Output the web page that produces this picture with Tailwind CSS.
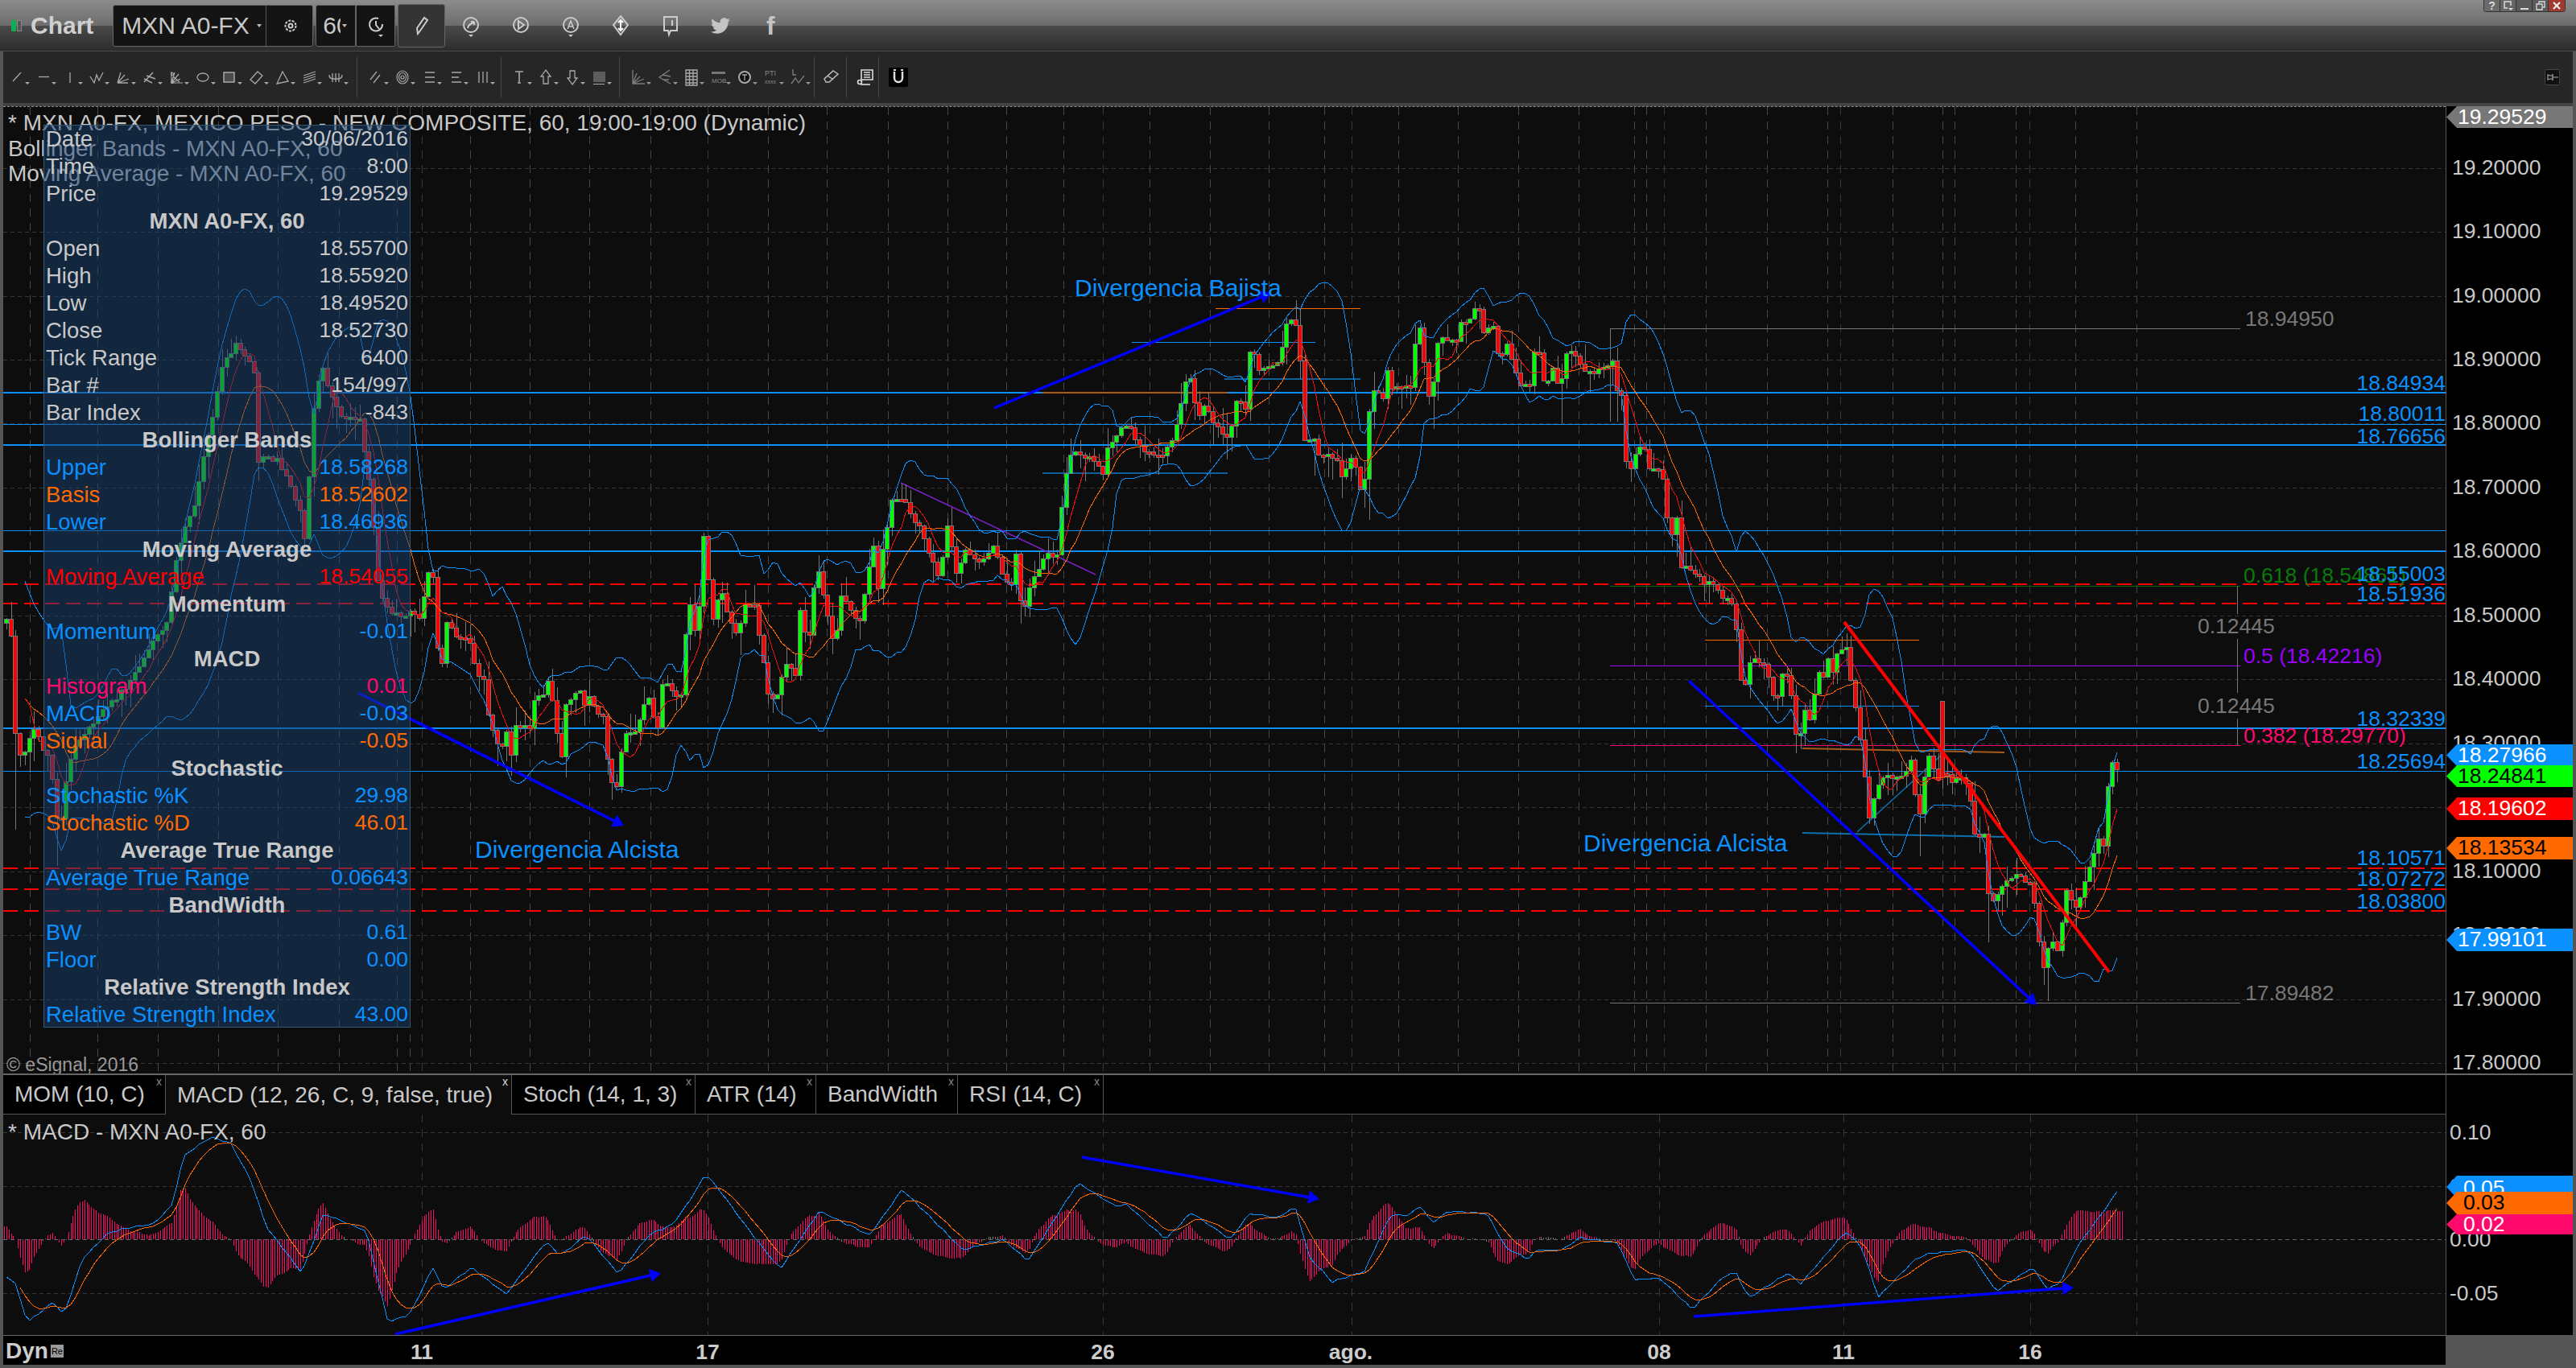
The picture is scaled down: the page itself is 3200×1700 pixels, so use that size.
<!DOCTYPE html>
<html>
<head>
<meta charset="utf-8">
<script src="https://cdn.jsdelivr.net/npm/@tailwindcss/browser@4"></script>
</head>
<body class="m-0 bg-black">
<div class="flex h-[1700px] w-[3200px] flex-col overflow-hidden bg-[#555] pb-1 font-['Liberation_Sans',Arial,sans-serif] text-[26.500px] text-[#c8c8c8]">

  <!-- title bar -->
  <header class="relative flex h-[64px] shrink-0 items-center border-b border-[#4a4a4a] bg-[linear-gradient(#8c8c8c_0,#6c6c6c_32px,#4a4a4a_32px,#2c2c2c_63px)] pl-[14px]">
    <span class="h-[14px] w-[6px] rounded-[1px] bg-[#10b050]"></span>
    <span class="ml-[1px] h-[14px] w-[6px] border border-[#888] bg-[#555]"></span>
    <span class="ml-[11px] text-[30px] font-bold text-[#d0d0d0]">Chart</span>
    <div class="ml-[24px] flex h-[52px] w-[249px] items-center rounded-[3px] border border-[#666] bg-[#141414] text-[30px]">
      <span class="w-[178px] overflow-hidden whitespace-nowrap pl-[10px]">MXN A0-FX</span>
      <svg class="mr-[5px] h-[6px] w-[6px]" viewBox="0 0 6 6"><path d="M0 1h6L3 5z" fill="#bbb"/></svg>
      <span class="h-full w-px bg-[#555]"></span>
      <svg class="ml-[20px] h-[24px] w-[20px]" viewBox="0 0 20 24" fill="none" stroke="#ccc" stroke-width="2"><circle cx="10" cy="12" r="6.5" stroke-dasharray="3 1.5"/><circle cx="10" cy="12" r="2.5"/></svg>
    </div>
    <div class="ml-[3px] flex h-[52px] w-[50px] items-center rounded-l-[3px] border border-[#666] bg-[#141414] text-[30px]">
      <span class="ml-[8px] w-[22px] overflow-hidden">60</span>
      <svg class="ml-[2px] h-[6px] w-[6px]" viewBox="0 0 6 6"><path d="M0 1h6L3 5z" fill="#bbb"/></svg>
    </div>
    <div class="flex h-[52px] w-[49px] items-center justify-center rounded-[2px] border border-[#666] bg-[#141414]">
      <svg class="h-[28px] w-[24px]" viewBox="0 0 24 28" fill="none" stroke="#ccc" stroke-width="2"><path d="M15 5a8 8 0 1 0 5 7"/><path d="M12 8v5l4 5"/><path d="M15 25h6l-3 3z" fill="#ccc" stroke="none"/></svg>
    </div>
    <div class="ml-[3px] flex h-[54px] w-[59px] items-center justify-center rounded-[3px] border border-[#666] bg-[#343434]">
      <svg class="h-[28px] w-[22px]" viewBox="0 0 22 28" fill="none" stroke="#ccc" stroke-width="2"><path d="M6 24l-1-7L14 4l4 3-9 13z"/></svg>
    </div>
    <div class="ml-[17px] flex items-center gap-[32px]">
      <svg class="h-[32px] w-[30px]" viewBox="0 0 30 32" fill="none" stroke="#ccc" stroke-width="2"><circle cx="15" cy="15" r="9"/><path d="M11 19c1-6 4-4 8-8M19 11v4M19 11h-4"/><path d="M12 27h6l-3 3z" fill="#ccc" stroke="none"/></svg>
      <svg class="h-[32px] w-[30px]" viewBox="0 0 30 32" fill="none" stroke="#ccc" stroke-width="2"><circle cx="15" cy="15" r="9"/><path d="M12 10l7 5-7 5z"/></svg>
      <svg class="h-[32px] w-[30px]" viewBox="0 0 30 32" fill="none" stroke="#ccc" stroke-width="2"><circle cx="15" cy="15" r="9"/><path d="M11 20l4-10 4 10M12.500 17h5" stroke-width="1.500"/><path d="M12 27h6l-3 3z" fill="#ccc" stroke="none"/></svg>
      <svg class="h-[32px] w-[30px]" viewBox="0 0 30 32" fill="none" stroke="#ccc" stroke-width="2"><path d="M15 4l9 11-9 12-9-12z"/><path d="M15 9v13M12 12l3-3 3 3M12 19l3 3 3-3" stroke="#fff"/></svg>
      <svg class="h-[32px] w-[30px]" viewBox="0 0 30 32" fill="none" stroke="#ccc" stroke-width="2"><path d="M7 5h16v17h-8l-2 5-1-5H7z"/><path d="M17 9v7" stroke-width="2"/></svg>
      <svg class="h-[32px] w-[30px]" viewBox="-3 -4 30 32"><path fill="#c4c4c4" d="M23.950 4.570a10 10 0 01-2.820.770 4.960 4.960 0 002.160-2.720c-.950.550-2 .950-3.130 1.170a4.920 4.920 0 00-8.380 4.480C7.690 8.090 4.070 6.130 1.640 3.160a4.820 4.820 0 00-.660 2.470c0 1.710.870 3.210 2.190 4.100a4.900 4.900 0 01-2.230-.620v.060a4.920 4.920 0 003.950 4.830 5 5 0 01-2.210.080 4.940 4.940 0 004.600 3.420A9.870 9.870 0 010 19.540a14 14 0 007.560 2.210c9.050 0 14-7.500 14-14 0-.210 0-.420-.010-.630.960-.700 1.800-1.560 2.460-2.550z"/></svg>
      <span class="w-[30px] text-center text-[32px] leading-[32px] font-bold text-[#c4c4c4]">f</span>
    </div>
    <div class="absolute top-0 right-[13px] flex h-[15px] w-[102px] overflow-hidden rounded-b-[4px] border-x border-b border-[#333] text-[14px] leading-[14px] text-[#ddd]">
      <span class="w-[20px] border-r border-[#333] bg-[#6a6a6a] text-center font-bold">?</span>
      <span class="flex w-[20px] items-center justify-center border-r border-[#333] bg-[#666]"><svg class="h-[12px] w-[12px]" viewBox="0 0 12 12" fill="none" stroke="#ddd" stroke-width="1.500"><path d="M9 6V1H1v8h4"/><path d="M6 9h6l-3 3z" fill="#ddd" stroke="none"/></svg></span>
      <span class="flex w-[20px] items-end justify-center border-r border-[#333] bg-[#5a5a5a] pb-[2px]"><span class="h-[2px] w-[10px] bg-[#ddd]"></span></span>
      <span class="flex w-[20px] items-center justify-center border-r border-[#333] bg-[#5a5a5a]"><svg class="h-[12px] w-[12px]" viewBox="0 0 12 12" fill="none" stroke="#ddd" stroke-width="1.300"><path d="M1 4h7v7H1zM4 3V1h7v7H9"/></svg></span>
      <span class="flex w-[20px] items-center justify-center bg-[#a03a30]"><svg class="h-[10px] w-[10px]" viewBox="0 0 10 10" stroke="#eee" stroke-width="2.200"><path d="M1 1l8 8M9 1L1 9"/></svg></span>
    </div>
  </header>

  <!-- drawing toolbar -->
  <div class="mx-1 flex h-[68px] shrink-0 items-center border-b-4 border-[#444] bg-[#262626] pl-1">
    <div class="flex items-center" >
      <svg class="h-[30px] w-[33px] shrink-0" viewBox="0 0 33 30" fill="none" stroke="#a8a8a8" stroke-width="1.300"><path d="M8 20L18 9"/><path d="M23 21h6l-3 3z" fill="#aaa" stroke="none"/></svg>
      <svg class="h-[30px] w-[33px] shrink-0" viewBox="0 0 33 30" fill="none" stroke="#a8a8a8" stroke-width="1.300"><path d="M7 14.500h13"/><path d="M23 21h6l-3 3z" fill="#aaa" stroke="none"/></svg>
      <svg class="h-[30px] w-[33px] shrink-0" viewBox="0 0 33 30" fill="none" stroke="#a8a8a8" stroke-width="1.300"><path d="M13 9v13"/><path d="M23 21h6l-3 3z" fill="#aaa" stroke="none"/></svg>
      <svg class="h-[30px] w-[33px] shrink-0" viewBox="0 0 33 30" fill="none" stroke="#a8a8a8" stroke-width="1.300"><path d="M5 14l5 8 3-10 3 7 5-10"/><path d="M23 21h6l-3 3z" fill="#aaa" stroke="none"/></svg>
      <svg class="h-[30px] w-[33px] shrink-0" viewBox="0 0 33 30" fill="none" stroke="#a8a8a8" stroke-width="1.300"><path d="M6 22l4-13M6 22l9-10M6 22l14-5M6 22h13"/><path d="M23 21h6l-3 3z" fill="#aaa" stroke="none"/></svg>
      <svg class="h-[30px] w-[33px] shrink-0" viewBox="0 0 33 30" fill="none" stroke="#a8a8a8" stroke-width="1.500"><path d="M6 21L17 9M9 13l11 4M6 17l10 5"/><path d="M23 21h6l-3 3z" fill="#aaa" stroke="none"/></svg>
      <svg class="h-[30px] w-[33px] shrink-0" viewBox="0 0 33 30" fill="none" stroke="#a8a8a8" stroke-width="1.200"><path d="M7 8v14h14M7 22l4-13M7 22l9-11M7 22l11-5M9 14l8 7"/><circle cx="8" cy="11" r="1.500"/><circle cx="8" cy="21" r="1.500"/><path d="M23 21h6l-3 3z" fill="#aaa" stroke="none"/></svg>
      <svg class="h-[30px] w-[33px] shrink-0" viewBox="0 0 33 30" fill="none" stroke="#a8a8a8" stroke-width="1.300"><ellipse cx="13" cy="15" rx="7" ry="5"/><path d="M23 21h6l-3 3z" fill="#aaa" stroke="none"/></svg>
      <svg class="h-[30px] w-[33px] shrink-0" viewBox="0 0 33 30" fill="#4a4a4a" stroke="#bbb" stroke-width="1.300"><rect x="6" y="9" width="13" height="12"/><path d="M23 21h6l-3 3z" fill="#aaa" stroke="none"/></svg>
      <svg class="h-[30px] w-[33px] shrink-0" viewBox="0 0 33 30" fill="none" stroke="#a8a8a8" stroke-width="1.300"><path d="M15 8l6 5-9 10-6-5z"/><path d="M23 21h6l-3 3z" fill="#aaa" stroke="none"/></svg>
      <svg class="h-[30px] w-[33px] shrink-0" viewBox="0 0 33 30" fill="none" stroke="#a8a8a8" stroke-width="1.300"><path d="M13 8l7 12-14 3z"/><path d="M23 21h6l-3 3z" fill="#aaa" stroke="none"/></svg>
      <svg class="h-[30px] w-[33px] shrink-0" viewBox="0 0 33 30" fill="none" stroke="#a8a8a8" stroke-width="1.300"><path d="M6 13l15-5M6 16l15-5M6 19l15-5M6 22l15-5"/><path d="M23 21h6l-3 3z" fill="#aaa" stroke="none"/></svg>
      <svg class="h-[30px] w-[33px] shrink-0" viewBox="0 0 33 30" fill="none" stroke="#a8a8a8" stroke-width="1.300"><path d="M5 12c0 5 3 5 8 5s8 0 8-5M9 10v11M13 10v11M17 10v11"/><path d="M23 21h6l-3 3z" fill="#aaa" stroke="none"/></svg>
    </div>
    <span class="ml-[6px] h-[50px] w-px bg-[#484848]"></span>
    <div class="ml-[10px] flex items-center">
      <svg class="h-[30px] w-[33px] shrink-0" viewBox="0 0 33 30" fill="none" stroke="#a8a8a8" stroke-width="1.300"><path d="M6 18l8-10M10 22l8-10"/><path d="M23 21h6l-3 3z" fill="#aaa" stroke="none"/></svg>
      <svg class="h-[30px] w-[33px] shrink-0" viewBox="0 0 33 30" fill="none" stroke="#a8a8a8" stroke-width="1.200"><ellipse cx="13" cy="15" rx="7" ry="8"/><ellipse cx="13" cy="15" rx="4.500" ry="5.500"/><circle cx="13" cy="15" r="2"/><path d="M23 21h6l-3 3z" fill="#aaa" stroke="none"/></svg>
      <svg class="h-[30px] w-[33px] shrink-0" viewBox="0 0 33 30" fill="none" stroke="#a8a8a8" stroke-width="1.300"><path d="M8 9h12M8 15h12M8 21h12"/><path d="M23 21h6l-3 3z" fill="#aaa" stroke="none"/></svg>
      <svg class="h-[30px] w-[33px] shrink-0" viewBox="0 0 33 30" fill="none" stroke="#a8a8a8" stroke-width="1.300"><path d="M8 9h12M8 15h9M8 21h12"/><path d="M23 21h6l-3 3z" fill="#aaa" stroke="none"/></svg>
      <svg class="h-[30px] w-[33px] shrink-0" viewBox="0 0 33 30" fill="none" stroke="#a8a8a8" stroke-width="1.300"><path d="M9 8v14M14 8v14M19 8v14"/><path d="M23 21h6l-3 3z" fill="#aaa" stroke="none"/></svg>
    </div>
    <span class="ml-[3px] h-[50px] w-px bg-[#484848]"></span>
    <div class="ml-[9px] flex items-center">
      <svg class="h-[30px] w-[33px] shrink-0" viewBox="0 0 33 30" fill="none" stroke="#a8a8a8" stroke-width="1.600"><path d="M8 8h10M13 8v14M11 22h4"/><path d="M23 21h6l-3 3z" fill="#aaa" stroke="none"/></svg>
      <svg class="h-[30px] w-[33px] shrink-0" viewBox="0 0 33 30" fill="none" stroke="#a8a8a8" stroke-width="1.300"><path d="M13 6l6 8h-3v9h-6v-9H7z"/><path d="M23 21h6l-3 3z" fill="#aaa" stroke="none"/></svg>
      <svg class="h-[30px] w-[33px] shrink-0" viewBox="0 0 33 30" fill="none" stroke="#a8a8a8" stroke-width="1.300"><path d="M13 24l6-8h-3V7h-6v9H7z"/><path d="M23 21h6l-3 3z" fill="#aaa" stroke="none"/></svg>
      <svg class="h-[30px] w-[33px] shrink-0" viewBox="0 0 33 30" fill="#5c5c5c" stroke="none"><rect x="6" y="8" width="15" height="13"/><path d="M6 23h14v1H6z" fill="#aaa"/><path d="M23 21h6l-3 3z" fill="#aaa"/></svg>
    </div>
    <span class="ml-[5px] h-[50px] w-px bg-[#484848]"></span>
    <div class="ml-[10px] flex items-center">
      <svg class="h-[30px] w-[33px] shrink-0" viewBox="0 0 33 30" fill="none" stroke="#7d7d7d" stroke-width="1.300"><path d="M6 6v17h15M6 23l5-13M6 23l9-9M6 23l14-6"/><path d="M23 21h6l-3 3z" fill="#999" stroke="none"/></svg>
      <svg class="h-[30px] w-[33px] shrink-0" viewBox="0 0 33 30" fill="none" stroke="#7d7d7d" stroke-width="1.300"><path d="M19 6L6 15l14 8M10 12l10 2M10 18l8 0"/><path d="M23 21h6l-3 3z" fill="#999" stroke="none"/></svg>
      <svg class="h-[30px] w-[33px] shrink-0" viewBox="0 0 33 30" fill="none" stroke="#aaa" stroke-width="1.300"><path d="M6 6h14v19H6zM6 10h14M6 14h14M6 18h14M6 22h14M10.500 6v19M15 6v19"/><path d="M23 21h6l-3 3z" fill="#999" stroke="none"/></svg>
      <svg class="h-[30px] w-[33px] shrink-0" viewBox="0 0 33 30" fill="#777"><rect x="5" y="8" width="17" height="3"/><text x="5" y="22" font-size="8" fill="#888">MOB</text><path d="M23 21h6l-3 3z" fill="#999"/></svg>
      <svg class="h-[30px] w-[33px] shrink-0" viewBox="0 0 33 30" fill="none" stroke="#aaa" stroke-width="1.300"><circle cx="13" cy="15" r="7" fill="#111" stroke-width="2"/><path d="M10 12h6M13 12v7"/><path d="M23 21h6l-3 3z" fill="#999" stroke="none"/></svg>
      <svg class="h-[30px] w-[33px] shrink-0" viewBox="0 0 33 30" fill="#888"><text x="5" y="13" font-size="9">PTI</text><text x="5" y="23" font-size="7">xxxx</text><path d="M23 21h6l-3 3z" fill="#999"/></svg>
      <svg class="h-[30px] w-[33px] shrink-0" viewBox="0 0 33 30" fill="none" stroke="#7d7d7d" stroke-width="1.300"><path d="M7 5v7h4M5 23l5-7 4 6 7-9"/><path d="M23 21h6l-3 3z" fill="#999" stroke="none"/></svg>
    </div>
    <span class="h-[50px] w-px bg-[#484848]"></span>
    <svg class="ml-[7px] h-[30px] w-[30px] shrink-0" viewBox="0 0 30 30" fill="none" stroke="#bbb" stroke-width="1.500"><path d="M7 21l-2-4L16 7l6 4-11 10zM9 13l7 5"/></svg>
    <span class="ml-[2px] h-[50px] w-px bg-[#484848]"></span>
    <svg class="ml-[8px] h-[30px] w-[30px] shrink-0" viewBox="0 0 30 30" fill="none" stroke="#ddd" stroke-width="1.600"><path d="M10 6h14v12H10zM13 9h8M13 12h8M13 15h8"/><circle cx="8" cy="21" r="2.500"/><path d="M9 24h12"/></svg>
    <span class="ml-[1px] h-[50px] w-px bg-[#484848]"></span>
    <span class="ml-[12px] flex h-[24px] w-[24px] items-center justify-center rounded-[2px] bg-black">
      <svg class="h-[20px] w-[14px]" viewBox="0 0 14 20" fill="none" stroke="#ddd" stroke-width="2.500"><path d="M2 3v8a5 5 0 0 0 10 0V3"/><path d="M1 1h3M10 1h3" stroke-width="2"/></svg>
    </span>
    <span class="mr-[16px] ml-auto flex h-[20px] w-[19px] items-center justify-center rounded-[2px] border border-[#444] bg-[#111]">
      <svg class="h-[10px] w-[14px]" viewBox="0 0 14 10" fill="none" stroke="#aaa" stroke-width="1.200"><path d="M1 2l3 1h3V1v8-2H4L1 8zM7 5h7"/></svg>
    </span>
  </div>

  <!-- price pane -->
  <section class="mx-1 flex h-[1204px] shrink-0 border-b-2 border-[#666]">
    <div class="relative h-[1202px] w-[3034px] shrink-0 overflow-hidden border-t border-dashed border-[#888] bg-[#0d0d0d]">
      <svg id="main" class="absolute top-0 left-0 h-[1202px] w-[3034px]" viewBox="4 132 3034 1202"></svg>

      <div class="absolute top-[5px] left-[6px] text-[28px] leading-[30px] whitespace-nowrap">* MXN A0-FX, MEXICO PESO - NEW COMPOSITE, 60, 19:00-19:00 (Dynamic)</div>
      <div class="absolute top-[37px] left-[6px] text-[28px] leading-[30px] whitespace-nowrap">Bollinger Bands - MXN A0-FX, 60</div>
      <div class="absolute top-[68px] left-[6px] text-[28px] leading-[30px] whitespace-nowrap">Moving Average - MXN A0-FX, 60</div>
      <div class="absolute top-[1175px] left-[4px] whitespace-nowrap text-[23px] leading-[30px] text-[#999]">© eSignal, 2016</div>

      <div class="absolute top-[208px] left-[1331px] text-[30px] leading-[34px] whitespace-nowrap text-[#0a90ff]">Divergencia Bajista</div>
      <div class="absolute top-[906px] left-[586px] text-[30px] leading-[34px] whitespace-nowrap text-[#0a90ff]">Divergencia Alcista</div>
      <div class="absolute top-[898px] left-[1963px] text-[30px] leading-[34px] whitespace-nowrap text-[#0a90ff]">Divergencia Alcista</div>

      <div class="absolute top-[248px] left-[2785px] leading-[30px] text-[#777]">18.94950</div>
      <div class="absolute top-[1086px] left-[2785px] leading-[30px] text-[#777]">17.89482</div>
      <div class="absolute top-[630px] left-[2726px] leading-[30px] text-[#777]">0.12445</div>
      <div class="absolute top-[729px] left-[2726px] leading-[30px] text-[#777]">0.12445</div>
      <div class="absolute top-[567px] left-[2783px] leading-[30px] whitespace-nowrap text-[#0a7a0a]">0.618 (18.54861)</div>
      <div class="absolute top-[667px] left-[2783px] leading-[30px] whitespace-nowrap text-[#9900ff]">0.5 (18.42216)</div>
      <div class="absolute top-[766px] left-[2783px] leading-[30px] whitespace-nowrap text-[#ff0a6c]">0.382 (18.29770)</div>

      <div class="absolute top-[328px] right-0 leading-[30px] text-[#0a90ff]">18.84934</div>
      <div class="absolute top-[366px] right-0 leading-[30px] text-[#0a90ff]">18.80011</div>
      <div class="absolute top-[394px] right-0 leading-[30px] text-[#0a90ff]">18.76656</div>
      <div class="absolute top-[565px] right-0 leading-[30px] text-[#0a90ff]">18.55003</div>
      <div class="absolute top-[590px] right-0 leading-[30px] text-[#0a90ff]">18.51936</div>
      <div class="absolute top-[745px] right-0 leading-[30px] text-[#0a90ff]">18.32339</div>
      <div class="absolute top-[798px] right-0 leading-[30px] text-[#0a90ff]">18.25694</div>
      <div class="absolute top-[918px] right-0 leading-[30px] text-[#0a90ff]">18.10571</div>
      <div class="absolute top-[944px] right-0 leading-[30px] text-[#0a90ff]">18.07272</div>
      <div class="absolute top-[972px] right-0 leading-[30px] text-[#0a90ff]">18.03800</div>

      <!-- cursor data window -->
      <div class="absolute top-[22px] left-[50px] flex h-[1122px] w-[456px] flex-col border border-[#35566f] bg-[#173f6f]/50 pr-[2px] pl-[2px] text-[27.500px] [&_span:last-child]:text-[26.500px] [&_span:first-child]:text-[27.500px]">
        <div class="flex h-[34px] shrink-0 items-center justify-between"><span>Date</span><span>30/06/2016</span></div>
        <div class="flex h-[34px] shrink-0 items-center justify-between"><span>Time</span><span>8:00</span></div>
        <div class="flex h-[34px] shrink-0 items-center justify-between"><span>Price</span><span>19.29529</span></div>
        <div class="flex h-[34px] shrink-0 items-center justify-center font-bold">MXN A0-FX, 60</div>
        <div class="flex h-[34px] shrink-0 items-center justify-between"><span>Open</span><span>18.55700</span></div>
        <div class="flex h-[34px] shrink-0 items-center justify-between"><span>High</span><span>18.55920</span></div>
        <div class="flex h-[34px] shrink-0 items-center justify-between"><span>Low</span><span>18.49520</span></div>
        <div class="flex h-[34px] shrink-0 items-center justify-between"><span>Close</span><span>18.52730</span></div>
        <div class="flex h-[34px] shrink-0 items-center justify-between"><span>Tick Range</span><span>6400</span></div>
        <div class="flex h-[34px] shrink-0 items-center justify-between"><span>Bar #</span><span>154/997</span></div>
        <div class="flex h-[34px] shrink-0 items-center justify-between"><span>Bar Index</span><span>-843</span></div>
        <div class="flex h-[34px] shrink-0 items-center justify-center font-bold">Bollinger Bands</div>
        <div class="flex h-[34px] shrink-0 items-center justify-between text-[#0a90ff]"><span>Upper</span><span>18.58268</span></div>
        <div class="flex h-[34px] shrink-0 items-center justify-between text-[#ff6a00]"><span>Basis</span><span>18.52602</span></div>
        <div class="flex h-[34px] shrink-0 items-center justify-between text-[#0a90ff]"><span>Lower</span><span>18.46936</span></div>
        <div class="flex h-[34px] shrink-0 items-center justify-center font-bold">Moving Average</div>
        <div class="flex h-[34px] shrink-0 items-center justify-between text-[#ff0000]"><span>Moving Average</span><span>18.54055</span></div>
        <div class="flex h-[34px] shrink-0 items-center justify-center font-bold">Momentum</div>
        <div class="flex h-[34px] shrink-0 items-center justify-between text-[#0a90ff]"><span>Momentum</span><span>-0.01</span></div>
        <div class="flex h-[34px] shrink-0 items-center justify-center font-bold">MACD</div>
        <div class="flex h-[34px] shrink-0 items-center justify-between text-[#ff0a6c]"><span>Histogram</span><span>0.01</span></div>
        <div class="flex h-[34px] shrink-0 items-center justify-between text-[#0a90ff]"><span>MACD</span><span>-0.03</span></div>
        <div class="flex h-[34px] shrink-0 items-center justify-between text-[#ff6a00]"><span>Signal</span><span>-0.05</span></div>
        <div class="flex h-[34px] shrink-0 items-center justify-center font-bold">Stochastic</div>
        <div class="flex h-[34px] shrink-0 items-center justify-between text-[#0a90ff]"><span>Stochastic %K</span><span>29.98</span></div>
        <div class="flex h-[34px] shrink-0 items-center justify-between text-[#ff6a00]"><span>Stochastic %D</span><span>46.01</span></div>
        <div class="flex h-[34px] shrink-0 items-center justify-center font-bold">Average True Range</div>
        <div class="flex h-[34px] shrink-0 items-center justify-between text-[#0a90ff]"><span>Average True Range</span><span>0.06643</span></div>
        <div class="flex h-[34px] shrink-0 items-center justify-center font-bold">BandWidth</div>
        <div class="flex h-[34px] shrink-0 items-center justify-between text-[#0a90ff]"><span>BW</span><span>0.61</span></div>
        <div class="flex h-[34px] shrink-0 items-center justify-between text-[#0a90ff]"><span>Floor</span><span>0.00</span></div>
        <div class="flex h-[34px] shrink-0 items-center justify-center font-bold">Relative Strength Index</div>
        <div class="flex h-[34px] shrink-0 items-center justify-between text-[#0a90ff]"><span>Relative Strength Index</span><span>43.00</span></div>
      </div>
    </div>
    <!-- price axis -->
    <div class="relative w-[158px] shrink-0 overflow-hidden border-l border-[#555] bg-black text-[#c8c8c8]">
      <div class="absolute top-[61px] left-[7px] leading-[30px]">19.20000</div>
      <div class="absolute top-[140px] left-[7px] leading-[30px]">19.10000</div>
      <div class="absolute top-[220px] left-[7px] leading-[30px]">19.00000</div>
      <div class="absolute top-[299px] left-[7px] leading-[30px]">18.90000</div>
      <div class="absolute top-[378px] left-[7px] leading-[30px]">18.80000</div>
      <div class="absolute top-[458px] left-[7px] leading-[30px]">18.70000</div>
      <div class="absolute top-[537px] left-[7px] leading-[30px]">18.60000</div>
      <div class="absolute top-[617px] left-[7px] leading-[30px]">18.50000</div>
      <div class="absolute top-[696px] left-[7px] leading-[30px]">18.40000</div>
      <div class="absolute top-[776px] left-[7px] leading-[30px]">18.30000</div>
      <div class="absolute top-[855px] left-[7px] leading-[30px]">18.20000</div>
      <div class="absolute top-[935px] left-[7px] leading-[30px]">18.10000</div>
      <div class="absolute top-[1014px] left-[7px] leading-[30px]">18.00000</div>
      <div class="absolute top-[1094px] left-[7px] leading-[30px]">17.90000</div>
      <div class="absolute top-[1173px] left-[7px] leading-[30px]">17.80000</div>

      <div class="absolute top-0 left-0 flex h-[27px] w-[157px] items-center bg-[#777] pl-[14px] text-white [clip-path:polygon(13px_0,100%_0,100%_100%,13px_100%,0_50%)]">19.29529</div>
      <div class="absolute top-[793px] left-0 flex h-[27px] w-[157px] items-center bg-[#0a90ff] pl-[14px] text-white [clip-path:polygon(13px_0,100%_0,100%_100%,13px_100%,0_50%)]">18.27966</div>
      <div class="absolute top-[819px] left-0 flex h-[27px] w-[157px] items-center bg-[#00ff00] pl-[14px] text-black [clip-path:polygon(13px_0,100%_0,100%_100%,13px_100%,0_50%)]">18.24841</div>
      <div class="absolute top-[859px] left-0 flex h-[28px] w-[157px] items-center bg-[#ff0000] pl-[14px] text-white [clip-path:polygon(13px_0,100%_0,100%_100%,13px_100%,0_50%)]">18.19602</div>
      <div class="absolute top-[908px] left-0 flex h-[28px] w-[157px] items-center bg-[#ff6a00] pl-[14px] text-black [clip-path:polygon(13px_0,100%_0,100%_100%,13px_100%,0_50%)]">18.13534</div>
      <div class="absolute top-[1022px] left-0 flex h-[28px] w-[157px] items-center bg-[#0a90ff] pl-[14px] text-white [clip-path:polygon(13px_0,100%_0,100%_100%,13px_100%,0_50%)]">17.99101</div>
    </div>
  </section>

  <!-- indicator area -->
  <section class="mx-1 flex min-h-0 flex-1">
    <div class="flex w-[3034px] shrink-0 flex-col bg-black">
      <div class="flex h-[49px] shrink-0 items-stretch text-[28px]">
        <div class="relative flex w-[202px] items-center border-r border-b border-[#555] pl-[14px] whitespace-nowrap">MOM (10, C)<span class="absolute top-[1px] right-[4px] text-[14px] leading-[14px] text-[#888]">x</span></div>
        <div class="relative flex w-[430px] items-center border-r border-[#555] bg-[#0d0d0d] pl-[14px] whitespace-nowrap">MACD (12, 26, C, 9, false, true)<span class="absolute top-[1px] right-[4px] text-[14px] leading-[14px] text-[#ddd]">x</span></div>
        <div class="relative flex w-[228px] items-center border-r border-b border-[#555] pl-[14px] whitespace-nowrap">Stoch (14, 1, 3)<span class="absolute top-[1px] right-[4px] text-[14px] leading-[14px] text-[#888]">x</span></div>
        <div class="relative flex w-[150px] items-center border-r border-b border-[#555] pl-[14px] whitespace-nowrap">ATR (14)<span class="absolute top-[1px] right-[4px] text-[14px] leading-[14px] text-[#888]">x</span></div>
        <div class="relative flex w-[176px] items-center border-r border-b border-[#555] pl-[14px] whitespace-nowrap">BandWidth<span class="absolute top-[1px] right-[4px] text-[14px] leading-[14px] text-[#888]">x</span></div>
        <div class="relative flex w-[181px] items-center border-r border-b border-[#555] pl-[14px] whitespace-nowrap">RSI (14, C)<span class="absolute top-[1px] right-[4px] text-[14px] leading-[14px] text-[#888]">x</span></div>
        <div class="flex-1 border-b border-[#555]"></div>
      </div>
      <div class="relative h-[274px] shrink-0 overflow-hidden bg-[#0d0d0d]">
        <svg id="low" class="absolute top-0 left-0 h-[274px] w-[3034px]" viewBox="4 1385 3034 274"></svg>
        <div class="absolute top-[7px] left-[6px] text-[28px] leading-[30px] whitespace-nowrap">* MACD - MXN A0-FX, 60</div>
      </div>
      <!-- time axis -->
      <div class="relative flex-1 border-t border-[#666] bg-black font-bold text-[#ccc]">
        <div class="absolute top-[4px] left-[3px] flex items-center gap-[3px] text-[28px] leading-[30px]">Dyn<span class="flex h-[16px] w-[16px] items-center justify-center bg-[#999] text-[11px] leading-[11px] font-normal text-black">Re</span></div>
        <div class="absolute top-[5px] left-[505px] w-[30px] text-center leading-[30px]">11</div>
        <div class="absolute top-[5px] left-[860px] w-[30px] text-center leading-[30px]">17</div>
        <div class="absolute top-[5px] left-[1351px] w-[30px] text-center leading-[30px]">26</div>
        <div class="absolute top-[5px] left-[1644px] w-[60px] text-center leading-[30px]">ago.</div>
        <div class="absolute top-[5px] left-[2042px] w-[30px] text-center leading-[30px]">08</div>
        <div class="absolute top-[5px] left-[2271px] w-[30px] text-center leading-[30px]">11</div>
        <div class="absolute top-[5px] left-[2503px] w-[30px] text-center leading-[30px]">16</div>
      </div>
    </div>
    <!-- lower axis -->
    <div class="relative h-[323px] w-[158px] shrink-0 overflow-hidden border-l border-[#555] bg-black">
      <div class="absolute top-[56px] left-[4px] leading-[30px]">0.10</div>
      <div class="absolute top-[123px] left-[4px] leading-[30px]">0.05</div>
      <div class="absolute top-[189px] left-[4px] leading-[30px]">0.00</div>
      <div class="absolute top-[256px] left-[4px] leading-[30px]">-0.05</div>
      <div class="absolute top-[125px] left-0 flex h-[28px] w-[157px] items-start bg-[#0a90ff] pl-[21px] leading-[30px] text-white [clip-path:polygon(13px_0,100%_0,100%_100%,13px_100%,0_50%)]">0.05</div>
      <div class="absolute top-[145px] left-0 flex h-[28px] w-[157px] items-center bg-[#ff6a00] pl-[21px] text-black [clip-path:polygon(13px_0,100%_0,100%_100%,13px_100%,0_50%)]">0.03</div>
      <div class="absolute top-[173px] left-0 flex h-[25px] w-[157px] items-center bg-[#ff0a6c] pl-[21px] text-white [clip-path:polygon(13px_0,100%_0,100%_100%,13px_100%,0_50%)]">0.02</div>
    </div>
  </section>
</div>

<script>
(function(){
var P=[[6,810],[11,715],[19,910],[26,938],[33,925],[45,900],[52,930],[62,945],[72,1025],[80,1015],[83,950],[103,911],[155,854],[207,770],[220,685],[241,628],[276,456],[295,425],[317,463],[320,570],[345,570],[372,628],[378,666],[391,494],[400,456],[420,513],[448,520],[462,628],[472,740],[483,758],[507,766],
[509,760],[520,767],[526,750],[534,692],[540,733],[546,843],[555,773],[569,790],[583,797],[592,837],[600,837],[609,900],[623,930],[629,907],[635,940],[641,897],[658,903],[666,857],[672,877],[681,843],[692,910],[698,943],[704,857],[712,873],[718,850],[727,873],[735,860],[741,883],[753,887],[755,943],[764,990],[770,943],[781,900],[787,920],[796,887],[807,863],[816,907],[824,837],[839,867],[847,857],[850,800],[856,750],[867,797],[873,658],[879,707],[885,767],[896,732],[913,790],[925,753],[936,745],[948,817],[953,857],[965,867],[974,823],[988,837],[994,760],[1005,797],[1014,692],[1022,733],[1037,803],[1045,737],[1068,770],[1085,673],[1091,733],[1097,677],[1108,623],[1123,617],[1137,647],[1149,667],[1166,717],[1177,650],[1189,713],[1200,680],[1215,700],[1235,673],[1240,693],[1255,737],[1261,678],[1269,760],[1284,717],[1301,685],[1315,693],[1320,617],[1329,560],[1350,565],[1370,587],[1373,560],
[1400,523],[1413,547],[1427,563],[1445,570],[1458,540],[1474,473],[1483,467],[1485,527],[1496,500],[1507,520],[1527,547],[1534,493],[1547,503],[1550,437],[1556,433],[1561,460],[1587,453],[1596,413],[1601,393],[1612,403],[1615,450],[1619,517],[1623,570],[1630,527],[1634,553],[1641,567],[1659,563],[1668,593],[1681,563],[1690,603],[1699,587],[1701,510],[1708,483],[1717,500],[1724,457],[1730,483],[1753,477],[1759,413],[1766,407],[1768,447],[1779,517],[1782,453],[1788,413],[1811,427],[1813,403],[1829,390],[1837,380],[1846,423],[1853,392],[1864,450],[1869,422],[1889,478],[1902,473],[1907,432],[1913,438],[1920,480],[1931,452],[1938,487],[1945,438],[1958,440],[1971,465],[1989,460],[2003,450],[2007,478],[2015,493],[2018,563],[2025,580],[2041,550],[2047,580],[2065,587],[2070,643],[2079,673],[2083,645],[2087,710],[2094,703],
[2155,750],[2161,837],[2169,850],[2175,820],[2190,817],[2203,863],[2213,863],[2215,817],[2224,853],[2232,917],[2236,927],[2240,877],[2251,900],[2257,817],[2263,847],[2270,810],[2278,832],[2284,807],[2293,800],[2301,857],[2310,907],[2316,950],[2322,1017],[2331,980],[2345,960],[2360,970],[2375,943],[2383,1027],[2389,977],[2397,933],[2406,970],[2418,953],[2421,980],[2433,960],[2446,977],[2452,1033],[2467,1037],[2471,1133],[2483,1103],[2506,1087],[2525,1100],[2534,1177],[2540,1210],[2546,1160],[2555,1187],[2561,1148],[2567,1107],[2580,1130],[2592,1088],[2605,1043],[2615,1047],[2620,963],[2626,942],[2632,967]];
var M=[[4,1585],[18,1592],[34,1643],[67,1617],[79,1635],[103,1563],[134,1533],[147,1528],[192,1520],[214,1497],[228,1437],[246,1423],[263,1413],[286,1420],[312,1467],[330,1523],[375,1582],[402,1508],[455,1530],[482,1643],[509,1633],[538,1575],[551,1603],[585,1575],[629,1608],[678,1543],[696,1560],[728,1535],[768,1583],[808,1533],[835,1522],[857,1492],[877,1458],[902,1490],[929,1527],[969,1577],[1018,1505],[1080,1535],[1121,1478],[1196,1553],[1246,1540],[1277,1567],[1339,1470],[1384,1498],[1400,1497],[1448,1540],[1480,1507],[1528,1540],[1552,1508],[1587,1513],[1609,1500],[1627,1563],[1655,1593],[1695,1580],[1727,1510],[1750,1510],[1765,1499],[1779,1520],[1799,1505],[1847,1508],[1870,1550],[1898,1565],[1910,1553],[1942,1553],[1962,1538],[2010,1545],[2030,1590],[2062,1588],[2102,1627],[2142,1585],[2157,1582],[2172,1613],[2197,1597],[2221,1582],[2237,1595],[2293,1530],[2313,1550],[2333,1612],[2377,1567],[2397,1557],[2445,1553],[2480,1605],[2524,1575],[2544,1602],[2560,1593],[2580,1550],[2612,1507],[2634,1475]];
function at(T,x){for(var i=1;i<T.length;i++){if(x<=T[i][0]){var a=T[i-1],b=T[i];return a[1]+(b[1]-a[1])*(x-a[0])/(b[0]-a[0]);}}return T[T.length-1][1];}
var s=12345;function R(){s=(s*1664525+1013904223)%4294967296;return s/4294967296;}
var XS=[],C=[],O=[],H=[],L=[];var step=5.7;
for(var x=8;x<=2634;x+=step){XS.push(Math.round(x));}
for(var i=0;i<XS.length;i++){var c=at(P,XS[i])+(R()-.5)*9;C.push(c);O.push(i?C[i-1]:c+5);
 var t=Math.max(O[i],c),b=Math.min(O[i],c);H.push(b-1-Math.pow(R(),2.2)*24);L.push(t+1+Math.pow(R(),2.2)*28);}
function near(x){return Math.round((x-8)/step);}
L[near(2543)]=1243;L[near(2471)]=1170;L[near(2383)]=1063;H[near(2414)]=870;O[near(2414)]=870;C[near(2414)]=965;L[near(20)]=1030;L[near(72)]=1075;H[near(1768)]=400;L[near(1779)]=532;L[near(1938)]=525;L[near(2007)]=523;L[near(1630)]=590;L[near(1699)]=645;
var h=[];
function line(x1,y1,x2,y2,col,w,dash){h.push('<line x1="'+x1+'" y1="'+y1+'" x2="'+x2+'" y2="'+y2+'" stroke="'+col+'" stroke-width="'+w+'"'+(dash?' stroke-dasharray="'+dash+'"':'')+' shape-rendering="crispEdges"/>');}
var G=[37,121,196,271,345,421,493,509,524,584,658,732,808,879,954,1027,1103,1177,1250,1321,1370,1428,1503,1576,1645,1679,1737,1811,1886,1961,2030,2045,2067,2119,2195,2270,2286,2351,2413,2428,2504,2521,2578,2654];
var MAJ=[524,879,1370,1679,2067,2286,2521];
G.forEach(function(x){line(x,132,x,1334,MAJ.indexOf(x)>=0?'#383838':'#474747',1,'10 8');});
[208,287,367,446,525,605,684,764,843,923,1002,1082,1161,1241,1320].forEach(function(y){line(4,y,3044,y,'#363636',1,'5 4');});
[[487,2],[526,1],[552,2],[658,1],[684,2],[904,1.5],[957,1]].forEach(function(a){line(4,a[0],3038,a[0],'#0a90ff',a[1]);});
[725,749,1078,1104,1131].forEach(function(y){line(4,y,3038,y,'#ff0000',2,'18 8');});
line(2000,407,2783,407,'#777',1);line(2000,407,2000,523,'#777',1);
line(2000,727,2783,727,'#0a6a0a',1);line(2000,826,2783,826,'#9900ff',1);line(2000,925,2783,925,'#ff0a6c',1);line(2000,1245,2783,1245,'#777',1);
line(2779,727,2779,762,'#777',1);line(2779,793,2779,860,'#777',1);line(2779,892,2779,925,'#777',1);
line(1510,382,1690,382,'#ff6a00',1);line(1406,424,1634,424,'#0a90ff',1);line(1521,470,1690,470,'#0e5f9a',2);line(1295,487,1525,487,'#a65a1c',2);line(1295,587,1525,587,'#0e5f9a',2);
line(2118,794,2384,794,'#ff6a00',1);line(2118,876,2384,876,'#0a90ff',1);
h.push('<line x1="2239" y1="929" x2="2490" y2="934" stroke="#a65a1c" stroke-width="2"/><line x1="2239" y1="1034" x2="2490" y2="1039" stroke="#0e6fb0" stroke-width="2"/>');
h.push('<line x1="2307" y1="1033" x2="2412" y2="937" stroke="#0e6fb0" stroke-width="1.500"/><line x1="1119" y1="599" x2="1361" y2="713" stroke="#7a20c0" stroke-width="1.500"/>');
function poly(A,f,col,o){var p=[];for(var i=f;i<A.length;i++){p.push(XS[i]+','+Math.round(A[i]));}h.push('<polyline points="'+p.join(' ')+'" fill="none" stroke="'+col+'" stroke-width="1" shape-rendering="crispEdges"'+(o?' opacity="'+o+'"':'')+'/>');}
for(var i=0;i<XS.length;i++){var X=XS[i];line(X,Math.round(H[i]),X,Math.round(L[i]),'#777',1);}
for(var i=0;i<XS.length;i++){var X=XS[i],t=Math.round(Math.min(O[i],C[i])),b=Math.round(Math.max(O[i],C[i]));if(b-t<3)b=t+3;var up=C[i]<O[i];
 h.push('<rect x="'+(X-3)+'.5" y="'+t+'.5" width="5" height="'+(b-t)+'" fill="'+(up?'#00ff00':'#ff0000')+'" stroke="#777" shape-rendering="crispEdges"/>');}
var U=[],D=[],B=[],F=[];
for(var i=0;i<XS.length;i++){var n=Math.min(i+1,13),m=0,v=0;for(var j=i-n+1;j<=i;j++)m+=C[j];m/=n;for(var j=i-n+1;j<=i;j++)v+=(C[j]-m)*(C[j]-m);v=Math.sqrt(v/n);U.push(m-2*v);D.push(m+2*v);B.push(m);
 var k=Math.min(i+1,6),q=0;for(var j=i-k+1;j<=i;j++)q+=C[j];F.push(q/k);}
poly(U,4,'#0a90ff');poly(D,4,'#0a90ff');poly(B,4,'#ff6a00');poly(F,4,'#f01010');
function arrow(x1,y1,x2,y2,col,w){var a=Math.atan2(y2-y1,x2-x1),s=16,d=.55;h.push('<line x1="'+x1+'" y1="'+y1+'" x2="'+(x2-9*Math.cos(a))+'" y2="'+(y2-9*Math.sin(a))+'" stroke="'+col+'" stroke-width="'+w+'"/>');
 h.push('<polygon points="'+x2+','+y2+' '+(x2-s*Math.cos(a-d))+','+(y2-s*Math.sin(a-d))+' '+(x2-s*Math.cos(a+d))+','+(y2-s*Math.sin(a+d))+'" fill="'+col+'"/>');}
arrow(445,860,775,1025,'#0000ff',3.5);arrow(1235,506,1579,363,'#0000ff',3.5);arrow(2098,845,2530,1248,'#0000ff',3.5);
h.push('<line x1="2291" y1="772" x2="2620" y2="1207" stroke="#ff0000" stroke-width="4"/>');
document.getElementById('main').innerHTML=h.join('');
h=[];
[1407,1474,1607].forEach(function(y){line(4,y,3044,y,'#363636',1,'5 4');});
[524,879,1370,1679,2061,2290,2522,2654].forEach(function(x){line(x,1385,x,1659,'#383838',1,'10 8');});
var MA=[],SG=[],e=1600;for(var i=0;i<XS.length;i++){var v=at(M,XS[i])+Math.sin(i*1.9)*.8;MA.push(v);e+= (v-e)*.28;SG.push(e);}
var hs=2.85;for(var x=5;x<=2636;x+=hs){var f=(x-8)/step,a=Math.max(0,Math.min(XS.length-1,Math.floor(f))),b2=Math.min(XS.length-1,a+1),u=Math.max(0,Math.min(1,f-a)),d=((SG[a]-MA[a])*(1-u)+(SG[b2]-MA[b2])*u)*1.7;if(Math.abs(d)<.5)continue;var xr=Math.round(x);line(xr,1540,xr,Math.round(1540-d),Math.abs(d)<3?'#777':'#ff0a6c',1);}
line(4,1540,3044,1540,'#666',1,'5 4');
poly(MA,0,'#0a90ff');poly(SG,3,'#ff6a00');
arrow(491,1658,821,1582,'#0000ff',3.5);arrow(1344,1438,1639,1490,'#0000ff',3.5);arrow(2104,1636,2576,1600,'#0000ff',3.5);
document.getElementById('low').innerHTML=h.join('');
})();
</script>
</body>
</html>
